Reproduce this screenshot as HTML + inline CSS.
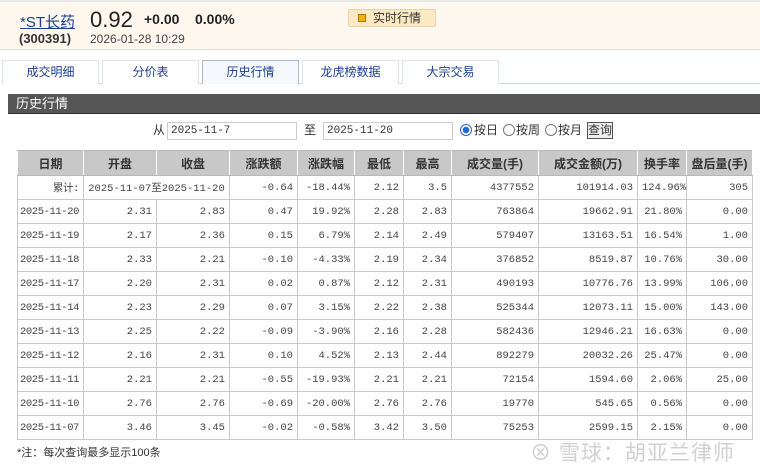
<!DOCTYPE html>
<html><head><meta charset="utf-8"><style>
*{margin:0;padding:0;box-sizing:border-box}
body{width:760px;height:470px;background:#fff;font-family:"Liberation Sans","Noto Sans CJK SC",sans-serif;font-size:12px;color:#333;position:relative;overflow:hidden}
.top{position:absolute;left:0;top:0;width:760px;height:50px;background:#fdf7ee;border-top:2px solid #e8e8e8;border-bottom:1px solid #e6e0d6}
.name{position:absolute;left:20px;top:9px;font-size:15px;color:#1a3f8f;text-decoration:underline}
.code{position:absolute;left:19px;top:29px;font-size:13px;font-weight:bold;color:#333}
.price{position:absolute;left:90px;top:5px;font-size:22px;color:#222}
.chg{position:absolute;left:144px;top:9px;font-size:14px;font-weight:bold;color:#222}
.pct{position:absolute;left:195px;top:9px;font-size:14px;font-weight:bold;color:#222}
.time{position:absolute;left:90px;top:30px;font-size:12px;color:#444}
.rt{position:absolute;left:348px;top:7px;width:88px;height:18px;background:#fbe9c4;border:1px solid #e8d2a8;border-radius:2px;font-size:12px;color:#333;padding-left:24px;line-height:16px}
.rt i{position:absolute;left:9px;top:4px;width:8px;height:8px;background:#f2b400;border:1px solid #b07b00}
.tabs{position:absolute;left:2px;top:60px;width:758px;height:24px;border-bottom:1px solid #cfd8e6}
.tab{position:absolute;top:0;height:24px;border:1px solid #dfe5ee;border-bottom:none;background:#fff;color:#1a3f8f;font-size:12px;text-align:center;line-height:23px}
.tab.on{border-color:#aab8cc;background:#f5f8fc}
.sec{position:absolute;left:8px;top:94px;width:752px;height:20px;background:#555;color:#fff;font-size:13px;line-height:20px;padding-left:8px;border-bottom:1px solid #333}
.q{position:absolute;top:121px;font-size:12px;color:#333}
.inp{position:absolute;top:122px;height:18px;border:1px solid #ccc;background:#fff;font-size:11px;line-height:16px;padding-left:3px;font-family:"Liberation Mono",monospace}
.rad{position:absolute;top:124px;width:12px;height:12px;border:1px solid #777;border-radius:50%;background:#fff}
.rad.on{border-color:#2467d8;background:radial-gradient(circle,#2467d8 0 3px,#fff 3.5px)}
.btn{position:absolute;left:587px;top:122px;width:26px;height:17px;border:1px solid #555;background:#eee;font-size:12px;line-height:15px;text-align:center}
table{position:absolute;left:17px;top:150px;width:735px;table-layout:fixed;border-collapse:collapse;font-family:"Liberation Mono","Noto Sans CJK SC",monospace;font-size:10.5px;color:#444}
td,th{border:1px solid #c8c8c8;height:24px;padding:0 4px;text-align:right;white-space:nowrap;overflow:hidden}
th{background:#c8c8c8;border-color:#b8b8b8 #fff;font-family:"Liberation Sans","Noto Sans CJK SC",sans-serif;font-weight:bold;font-size:12px;text-align:center;height:25px;color:#333;padding:0}
td:first-child{text-align:left;padding-left:2px;padding-right:0;letter-spacing:-0.4px}
.note{position:absolute;left:17px;top:444px;font-size:11px;color:#333}
.wm{position:absolute;left:530px;top:437px;font-size:21px;color:rgba(200,200,200,.85);letter-spacing:1px}
</style></head><body>
<div class="top">
<div class="name">*ST长药</div><div class="code">(300391)</div>
<div class="price">0.92</div><div class="chg">+0.00</div><div class="pct">0.00%</div>
<div class="time">2026-01-28 10:29</div>
<div class="rt"><i></i>实时行情</div>
</div>
<div class="tabs">
<div class="tab" style="left:0;width:97px">成交明细</div>
<div class="tab" style="left:100px;width:97px">分价表</div>
<div class="tab on" style="left:200px;width:97px">历史行情</div>
<div class="tab" style="left:300px;width:97px">龙虎榜数据</div>
<div class="tab" style="left:400px;width:97px">大宗交易</div>
</div>
<div class="sec">历史行情</div>
<div class="q" style="left:153px">从</div>
<div class="inp" style="left:167px;width:130px">2025-11-7</div>
<div class="q" style="left:304px">至</div>
<div class="inp" style="left:323px;width:130px">2025-11-20</div>
<div class="rad on" style="left:460px"></div><div class="q" style="left:474px">按日</div>
<div class="rad" style="left:503px"></div><div class="q" style="left:516px">按周</div>
<div class="rad" style="left:545px"></div><div class="q" style="left:558px">按月</div>
<div class="btn">查询</div>
<table>
<colgroup><col style="width:66px"><col style="width:73px"><col style="width:73px"><col style="width:68px"><col style="width:57px"><col style="width:49px"><col style="width:48px"><col style="width:87px"><col style="width:99px"><col style="width:49px"><col style="width:66px"></colgroup>
<tr><th>日期</th><th>开盘</th><th>收盘</th><th>涨跌额</th><th>涨跌幅</th><th>最低</th><th>最高</th><th>成交量(手)</th><th>成交金额(万)</th><th>换手率</th><th>盘后量(手)</th></tr>
<tr><td style="text-align:right;padding-right:4px">累计:</td><td colspan="2" style="text-align:center">2025-11-07至2025-11-20</td><td>-0.64</td><td>-18.44%</td><td>2.12</td><td>3.5</td><td>4377552</td><td>101914.03</td><td>124.96%</td><td>305</td></tr>
<tr><td>2025-11-20</td><td>2.31</td><td>2.83</td><td>0.47</td><td>19.92%</td><td>2.28</td><td>2.83</td><td>763864</td><td>19662.91</td><td>21.80%</td><td>0.00</td></tr>
<tr><td>2025-11-19</td><td>2.17</td><td>2.36</td><td>0.15</td><td>6.79%</td><td>2.14</td><td>2.49</td><td>579407</td><td>13163.51</td><td>16.54%</td><td>1.00</td></tr>
<tr><td>2025-11-18</td><td>2.33</td><td>2.21</td><td>-0.10</td><td>-4.33%</td><td>2.19</td><td>2.34</td><td>376852</td><td>8519.87</td><td>10.76%</td><td>30.00</td></tr>
<tr><td>2025-11-17</td><td>2.20</td><td>2.31</td><td>0.02</td><td>0.87%</td><td>2.12</td><td>2.31</td><td>490193</td><td>10776.76</td><td>13.99%</td><td>106.00</td></tr>
<tr><td>2025-11-14</td><td>2.23</td><td>2.29</td><td>0.07</td><td>3.15%</td><td>2.22</td><td>2.38</td><td>525344</td><td>12073.11</td><td>15.00%</td><td>143.00</td></tr>
<tr><td>2025-11-13</td><td>2.25</td><td>2.22</td><td>-0.09</td><td>-3.90%</td><td>2.16</td><td>2.28</td><td>582436</td><td>12946.21</td><td>16.63%</td><td>0.00</td></tr>
<tr><td>2025-11-12</td><td>2.16</td><td>2.31</td><td>0.10</td><td>4.52%</td><td>2.13</td><td>2.44</td><td>892279</td><td>20032.26</td><td>25.47%</td><td>0.00</td></tr>
<tr><td>2025-11-11</td><td>2.21</td><td>2.21</td><td>-0.55</td><td>-19.93%</td><td>2.21</td><td>2.21</td><td>72154</td><td>1594.60</td><td>2.06%</td><td>25.00</td></tr>
<tr><td>2025-11-10</td><td>2.76</td><td>2.76</td><td>-0.69</td><td>-20.00%</td><td>2.76</td><td>2.76</td><td>19770</td><td>545.65</td><td>0.56%</td><td>0.00</td></tr>
<tr><td>2025-11-07</td><td>3.46</td><td>3.45</td><td>-0.02</td><td>-0.58%</td><td>3.42</td><td>3.50</td><td>75253</td><td>2599.15</td><td>2.15%</td><td>0.00</td></tr>
</table>
<div class="note">*注：每次查询最多显示100条</div>
<div class="wm">⊗ 雪球：胡亚兰律师</div>
</body></html>
